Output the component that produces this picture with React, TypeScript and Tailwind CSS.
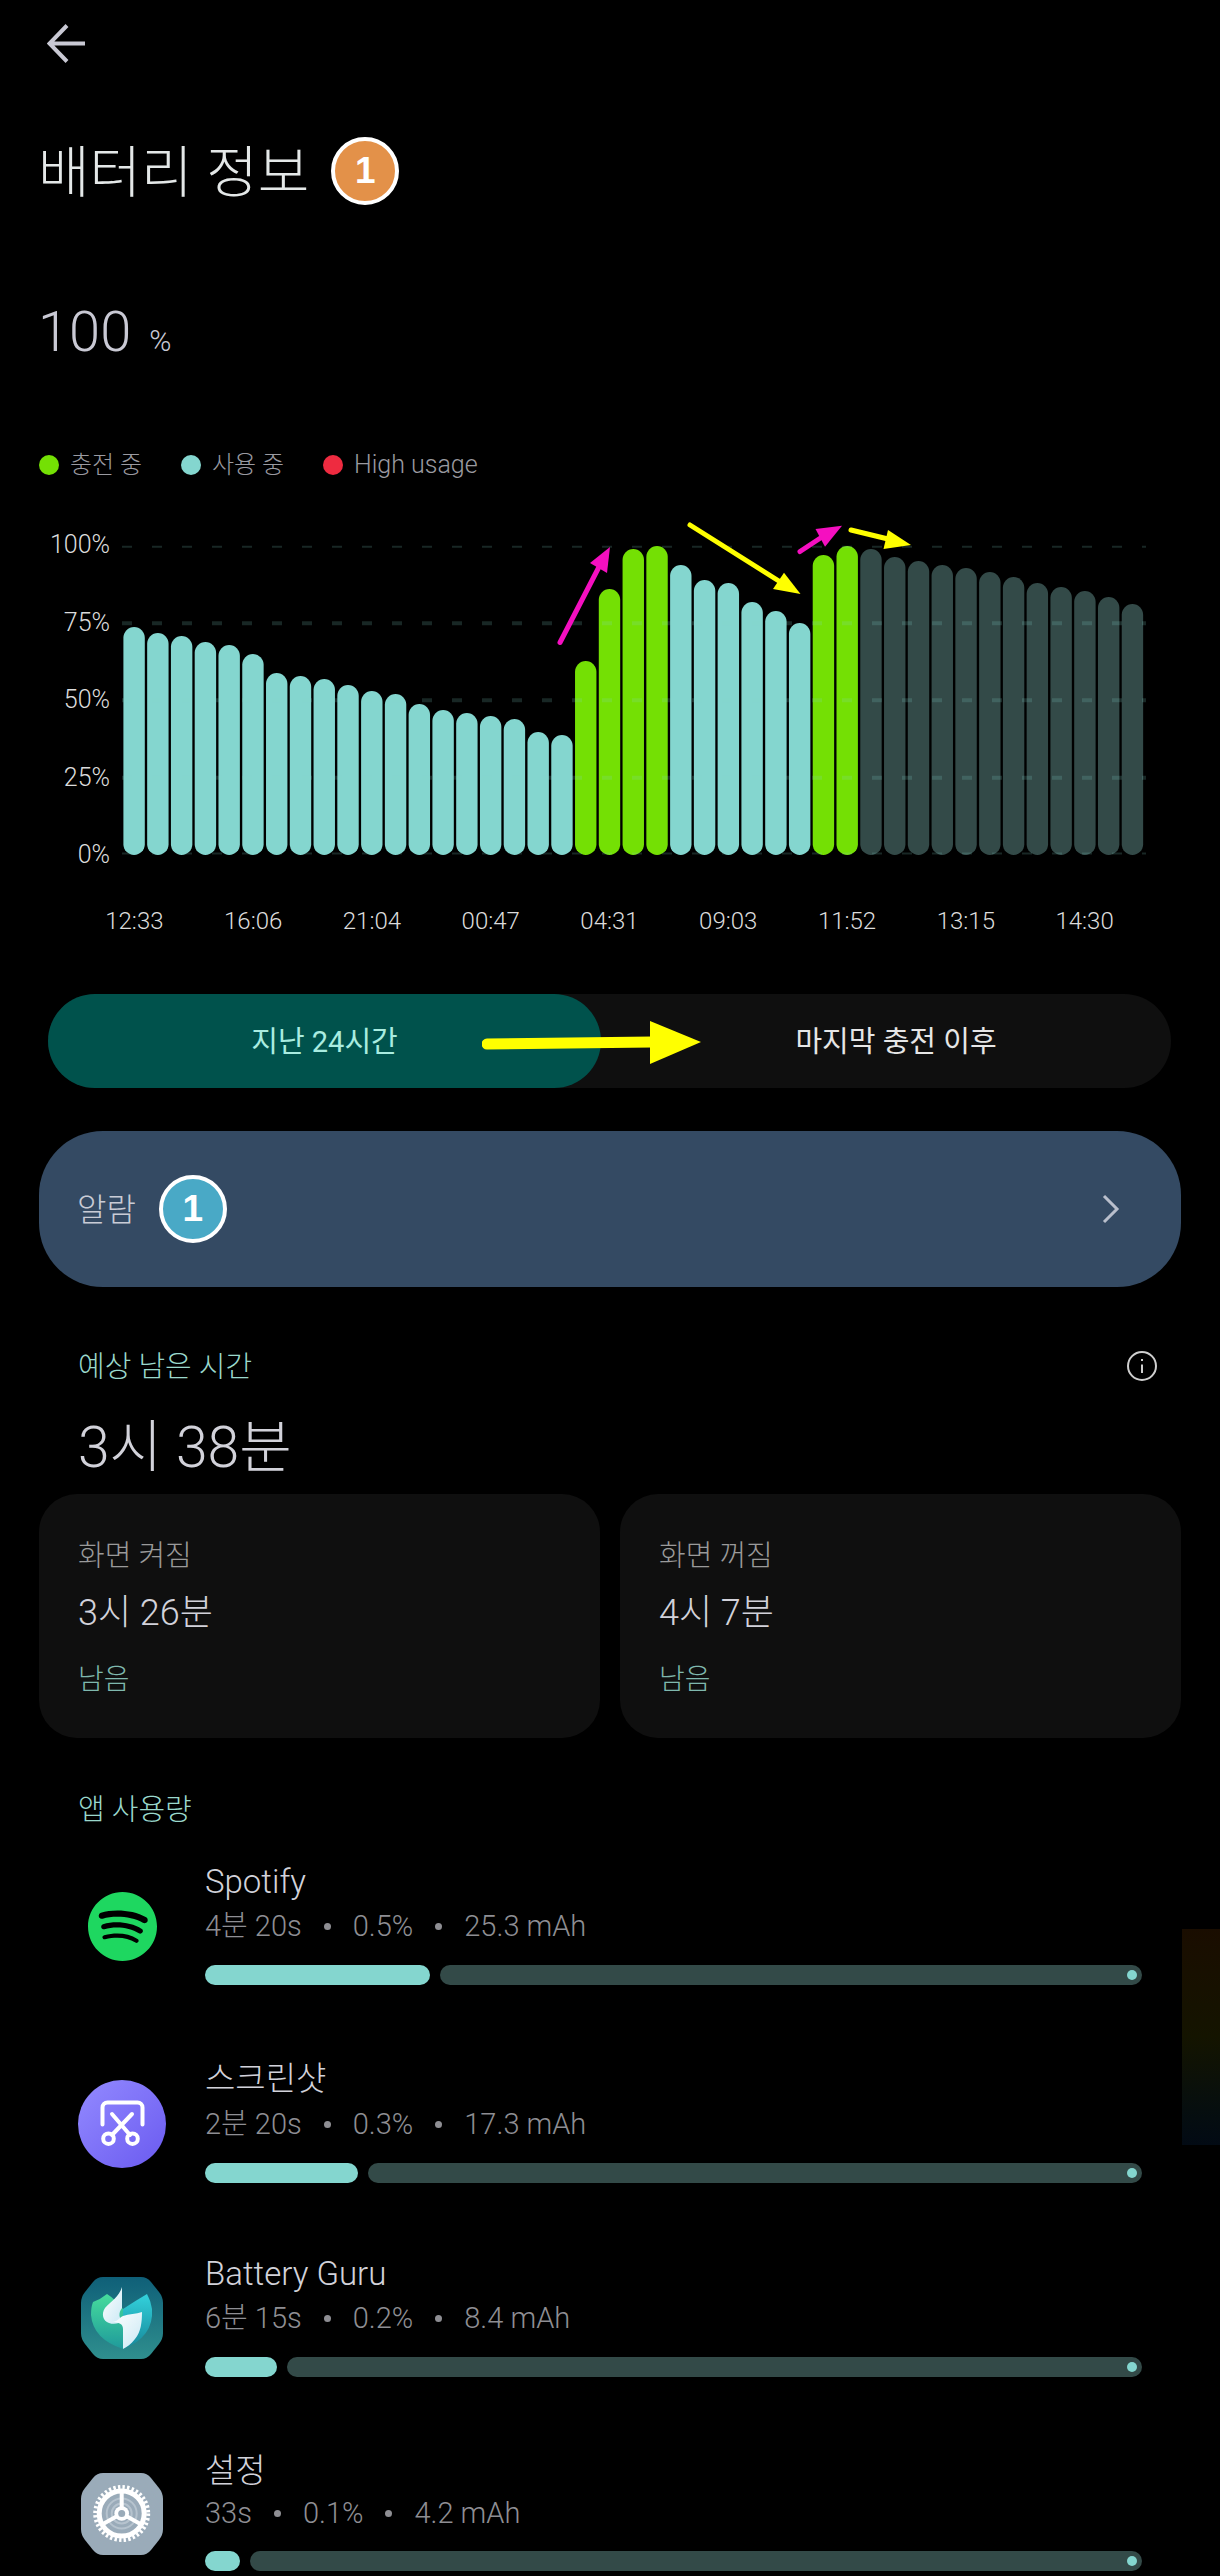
import { SiSpotify } from "react-icons/si";

const barTops = [
  627, 633, 636, 642, 645, 654, 673, 676, 679, 685, 691, 694, 704, 710, 713, 716, 719, 732, 735,
  661, 589, 549, 546,
  565, 580, 583, 602, 611, 623,
  555, 546,
  549, 557, 561, 565, 568, 572, 577, 583, 587, 591, 597, 604,
];

function barColor(index: number) {
  if (index >= 31) return "#334a48";
  if ((index >= 19 && index < 23) || index === 29 || index === 30) return "#74e004";
  return "#84d6cf";
}

const xLabels = ["12:33", "16:06", "21:04", "00:47", "04:31", "09:03", "11:52", "13:15", "14:30"];
const yLabels = ["100%", "75%", "50%", "25%", "0%"];

const octagon =
  "M22 0H60Q66 0 70 5L78 15Q82 20 82 26V56Q82 62 78 67L70 77Q66 82 60 82H22Q16 82 12 77L4 67Q0 62 0 56V26Q0 20 4 15L12 5Q16 0 22 0Z";

function ChartDrawing() {
  return (
    <svg width="1030" height="345" viewBox="120 515 1030 345" className="block">
      {barTops.map((top, i) => (
        <rect key={i} x={123.4 + i * 23.77} y={top} width={21.4} height={855 - top} rx={10.7} fill={barColor(i)} />
      ))}
      {/* linhas pontilhadas por cima das barras */}
      <g stroke="#84d6cf" strokeOpacity="0.18" strokeDasharray="10 20">
        <line x1="122" x2="1146" y1="546.7" y2="546.7" strokeWidth="2" />
        <line x1="122" x2="1146" y1="623.3" y2="623.3" strokeWidth="4" />
        <line x1="122" x2="1146" y1="700.3" y2="700.3" strokeWidth="4" />
        <line x1="122" x2="1146" y1="777.7" y2="777.7" strokeWidth="4" />
        <line x1="122" x2="1146" y1="853.5" y2="853.5" strokeWidth="2" />
      </g>
      <g strokeLinecap="round">
        <line x1="560" y1="642.5" x2="600" y2="565" stroke="#f50fc0" strokeWidth="5" />
        <polygon points="610,547 590,563 607,573" fill="#f50fc0" />
        <line x1="690" y1="525" x2="782" y2="583" stroke="#ffff00" strokeWidth="5" />
        <polygon points="800.5,594 784,572.7 773,589" fill="#ffff00" />
        <line x1="800" y1="551.5" x2="822" y2="537" stroke="#f50fc0" strokeWidth="5" />
        <polygon points="842,525.7 815.5,529 825,546.7" fill="#f50fc0" />
        <line x1="851" y1="530" x2="888" y2="539" stroke="#ffff00" strokeWidth="5" />
        <polygon points="911,545 888,530 883.5,549" fill="#ffff00" />
      </g>
    </svg>
  );
}

function NumberBadge({ color }: { color: string }) {
  return (
    <div className={`flex h-[68px] w-[68px] items-center justify-center rounded-full border-4 border-white font-['Liberation_Sans',sans-serif] text-[37px] font-bold text-white ${color}`}>
      1
    </div>
  );
}

function ScreenshotIcon() {
  return (
    <svg width="88" height="88" viewBox="0 0 88 88">
      <defs>
        <linearGradient id="shot" x1="0" y1="0" x2="1" y2="1">
          <stop offset="0" stopColor="#938aff" />
          <stop offset="1" stopColor="#6a5af0" />
        </linearGradient>
      </defs>
      <circle cx="44" cy="44" r="44" fill="url(#shot)" />
      <g fill="none" stroke="#fff" strokeLinecap="round" strokeLinejoin="round">
        <path d="M24.5 44.5V27.5a5 5 0 0 1 5-5h30a5 5 0 0 1 5 5v17" strokeWidth="4" />
        <path d="M34 34L52 55M54 34L34 55" strokeWidth="4" />
        <circle cx="30.5" cy="58.7" r="5.3" strokeWidth="4" />
        <circle cx="54.5" cy="58.7" r="5.3" strokeWidth="4" />
      </g>
    </svg>
  );
}

function GuruIcon() {
  return (
    <svg width="82" height="82" viewBox="0 0 82 82">
      <defs>
        <linearGradient id="guruBg" x1="0" y1="0" x2="0" y2="1">
          <stop offset="0" stopColor="#0f5f78" />
          <stop offset="1" stopColor="#2f8f8e" />
        </linearGradient>
        <linearGradient id="guruLeft" x1="0" y1="0" x2="0" y2="1">
          <stop offset="0" stopColor="#46dc9c" />
          <stop offset="1" stopColor="#1f9a9b" />
        </linearGradient>
        <linearGradient id="guruRight" x1="0" y1="0" x2="0" y2="1">
          <stop offset="0" stopColor="#33d2dc" />
          <stop offset="1" stopColor="#16889a" />
        </linearGradient>
        <linearGradient id="guruBolt" x1="0" y1="0" x2="1" y2="1">
          <stop offset="0" stopColor="#ffffff" />
          <stop offset="1" stopColor="#c9e8f4" />
        </linearGradient>
      </defs>
      <path d={octagon} fill="url(#guruBg)" />
      <path d="M12 25Q20 22 26 17Q34 22 42 32V72Q12 62 10 38Q10 30 12 25Z" fill="url(#guruLeft)" />
      <path d="M66 17Q70 24 71 32Q73 60 42 72V32Q54 24 66 17Z" fill="url(#guruRight)" />
      <path d="M41 10C38 20 30 24 24 31C20 37 22 44 28 46C34 48 38 46 42 44C38 42 37 36 41 31Z" fill="url(#guruBolt)" />
      <path d="M31 45C36 45 38 41 42 39C48 37 55 37 61 35C61 45 60 55 54 62C50 67 46 70 42 72V52C42 47 38 45 31 45Z" fill="url(#guruBolt)" />
    </svg>
  );
}

function SettingsIcon() {
  return (
    <svg width="82" height="82" viewBox="0 0 82 82">
      <path d={octagon} fill="#9aabb9" />
      <circle cx="40.7" cy="40.5" r="26.5" fill="none" stroke="#fff" strokeWidth="4" strokeDasharray="2.4 2.225" />
      <circle cx="40.7" cy="40.5" r="22.5" fill="none" stroke="#fff" strokeWidth="5" />
      <circle cx="40.7" cy="40.5" r="15" fill="none" stroke="#b6c3ce" strokeWidth="2" />
      <circle cx="40.7" cy="40.5" r="10" fill="none" stroke="#b6c3ce" strokeWidth="2" />
      <path d="M40.7 40.5V19M40.7 40.5L22 51M40.7 40.5L59.4 51" stroke="#fff" strokeWidth="4" />
      <circle cx="40.7" cy="40.5" r="7.3" fill="#fff" />
      <circle cx="40.7" cy="40.5" r="3.5" fill="#9aabb9" />
    </svg>
  );
}

const apps = [
  {
    name: "Spotify",
    stats: ["4분 20s", "0.5%", "25.3 mAh"],
    fill: 225,
    rowTop: "mt-[35px]",
    statsTop: "mt-[7px]",
    barTop: "mt-[22px]",
    icon: <SiSpotify size={69} color="#1ed760" />,
  },
  {
    name: "스크린샷",
    stats: ["2분 20s", "0.3%", "17.3 mAh"],
    fill: 153,
    rowTop: "mt-[74px]",
    statsTop: "mt-[8px]",
    barTop: "mt-[22px]",
    icon: <ScreenshotIcon />,
  },
  {
    name: "Battery Guru",
    stats: ["6분 15s", "0.2%", "8.4 mAh"],
    fill: 72,
    rowTop: "mt-[71px]",
    statsTop: "mt-[7px]",
    barTop: "mt-[22px]",
    icon: <GuruIcon />,
  },
  {
    name: "설정",
    stats: ["33s", "0.1%", "4.2 mAh"],
    fill: 35,
    rowTop: "mt-[74px]",
    statsTop: "mt-[5px]",
    barTop: "mt-[21px]",
    icon: <SettingsIcon />,
  },
];

function AppRow({ app }: { app: (typeof apps)[number] }) {
  return (
    <div className={`flex ${app.rowTop}`}>
      <div className="ml-[78px] mr-[39px] flex w-[88px] items-center justify-center pt-[5px]">{app.icon}</div>
      <div className="w-[937px]">
        <div className="h-[40px] text-[33px] leading-[40px] text-[#d2d2da]">{app.name}</div>
        <div className={`flex h-[34px] items-center gap-[22px] text-[29px] leading-[34px] text-[#8e8e93] ${app.statsTop}`}>
          {app.stats.map((stat, i) => (
            <div key={stat} className="flex items-center gap-[22px]">
              {i > 0 && <span className="h-[7px] w-[7px] rounded-full bg-[#8e8e93]" />}
              <span>{stat}</span>
            </div>
          ))}
        </div>
        <div className={`flex h-[20px] gap-[10px] ${app.barTop}`}>
          <div className="rounded-full bg-[#84d6cf]" style={{ width: app.fill }} />
          <div className="flex flex-1 items-center justify-end rounded-full bg-[#334a48] pr-[5px]">
            <span className="h-[10px] w-[10px] rounded-full bg-[#84d6cf]" />
          </div>
        </div>
      </div>
    </div>
  );
}

function TimeCard({ title, value }: { title: string; value: string }) {
  return (
    <div className="h-[244px] rounded-[38px] bg-[#0f0f0f] pl-[39px] pt-[45px]">
      <div className="h-[34px] text-[29px] leading-[34px] text-[#9a9a9a]">{title}</div>
      <div className="mt-[18px] h-[44px] text-[36px] leading-[44px] text-[#d2d2da]">{value}</div>
      <div className="mt-[28px] h-[34px] text-[28px] leading-[34px] text-[#7fb8ae]">{"남음"}</div>
    </div>
  );
}

export default function App() {
  return (
    <div className="relative h-[2576px] w-[1220px] overflow-hidden bg-black font-['Roboto','Noto_Sans_CJK_KR',sans-serif] font-light">
      <svg width="39" height="39" viewBox="0 0 39 39" className="ml-[47px] block translate-y-[24px]" fill="none" stroke="#c9c9d4" strokeWidth="4">
        <path d="M38 19.5H3M20 1.5L2.5 19.5L20 37.5" />
      </svg>

      <div className="ml-[38px] mt-[98px] flex h-[68px] items-center gap-[22px]">
        <h1 className="translate-y-[2px] text-[56px] font-light leading-[68px] text-[#e4e8e8]">{"배터리 정보"}</h1>
        <NumberBadge color="bg-[#e39149]" />
      </div>

      <div className="ml-[38px] mt-[95px] flex h-[60px] translate-y-[2px] items-baseline gap-[18px] leading-[60px] text-[#c9c9d4]">
        <span className="text-[56px] font-light">100</span>
        <span className="text-[30px]">%</span>
      </div>

      <div className="ml-[39px] mt-[89px] flex h-[30px] translate-y-[1px] items-center whitespace-nowrap text-[24px] leading-[30px] text-[#9a9aa0]">
        <span className="h-[20px] w-[20px] rounded-full bg-[#74e004]" />
        <span className="ml-[11px] w-[71px]">{"충전 중"}</span>
        <span className="ml-[40px] h-[20px] w-[20px] rounded-full bg-[#84d6cf]" />
        <span className="ml-[11px] w-[71px]">{"사용 중"}</span>
        <span className="ml-[40px] h-[20px] w-[20px] rounded-full bg-[#ee2b40]" />
        <span className="ml-[11px] text-[25px]">High usage</span>
      </div>

      <div className="mt-[36px] flex h-[345px]">
        <div className="mt-[15px] flex h-[340px] w-[110px] flex-col items-end justify-between text-[25px] leading-[30px] text-[#dcdcdc]">
          {yLabels.map((label) => (
            <span key={label}>{label}</span>
          ))}
        </div>
        <div className="ml-[10px]">
          <ChartDrawing />
        </div>
      </div>

      <div className="ml-[75px] mt-[46px] grid h-[30px] w-[1069px] grid-cols-9 text-center text-[24px] leading-[30px] text-[#dcdcdc]">
        {xLabels.map((label) => (
          <span key={label}>{label}</span>
        ))}
      </div>

      <div className="relative ml-[48px] mt-[58px] flex h-[94px] w-[1123px] rounded-full bg-[#0f0f0f] text-[29px]">
        <div className="flex w-[553px] items-center justify-center rounded-full bg-[#00524c] pt-[4px] font-normal text-[#a9ece0]">{"지난 24시간"}</div>
        <div className="flex flex-1 items-center justify-center pl-[20px] pt-[4px] font-normal text-[#e6e6e6]">{"마지막 충전 이후"}</div>
        <svg width="230" height="50" viewBox="0 0 230 50" className="absolute left-[434px] top-[25px]">
          <path d="M5 25L170 23" stroke="#ffff00" strokeWidth="11" strokeLinecap="round" />
          <polygon points="168,2 219,23 168,45" fill="#ffff00" />
        </svg>
      </div>

      <div className="ml-[39px] mt-[43px] flex h-[156px] w-[1142px] items-center rounded-[64px] bg-[#344a63] pl-[38px] pr-[60px]">
        <span className="translate-y-[1px] text-[32px] text-[#c9ccd6]">{"알람"}</span>
        <div className="ml-[23px]">
          <NumberBadge color="bg-[#49a9c6]" />
        </div>
        <svg width="20" height="30" viewBox="0 0 20 30" className="ml-auto" fill="none" stroke="#b9bfcc" strokeWidth="3">
          <path d="M3 2L16 15L3 28" />
        </svg>
      </div>

      <div className="ml-[78px] mt-[62px] flex h-[34px] w-[1079px] items-center justify-between text-[29px] leading-[34px] text-[#9ad8cc]">
        <span className="translate-y-[1px]">{"예상 남은 시간"}</span>
        <svg width="30" height="30" viewBox="0 0 30 30" fill="none" stroke="#cfcfcf" strokeWidth="2">
          <circle cx="15" cy="15" r="14" />
          <path d="M15 13.5V22M15 8V10" />
        </svg>
      </div>

      <div className="ml-[78px] mt-[35px] h-[60px] text-[57px] leading-[60px] text-[#d2d2da]">{"3시 38분"}</div>

      <div className="ml-[39px] mt-[16px] grid w-[1142px] grid-cols-2 gap-[20px]">
        <TimeCard title="화면 켜짐" value="3시 26분" />
        <TimeCard title="화면 꺼짐" value="4시 7분" />
      </div>

      <div className="ml-[78px] mt-[55px] h-[34px] text-[29px] leading-[34px] text-[#9ad8cc]">{"앱 사용량"}</div>

      {apps.map((app) => (
        <AppRow key={app.name} app={app} />
      ))}

      <div className="absolute left-[1182px] top-[1929px] h-[216px] w-[38px] bg-gradient-to-b from-[#1a0d00] via-[#141400] to-[#020a14]" />
    </div>
  );
}
